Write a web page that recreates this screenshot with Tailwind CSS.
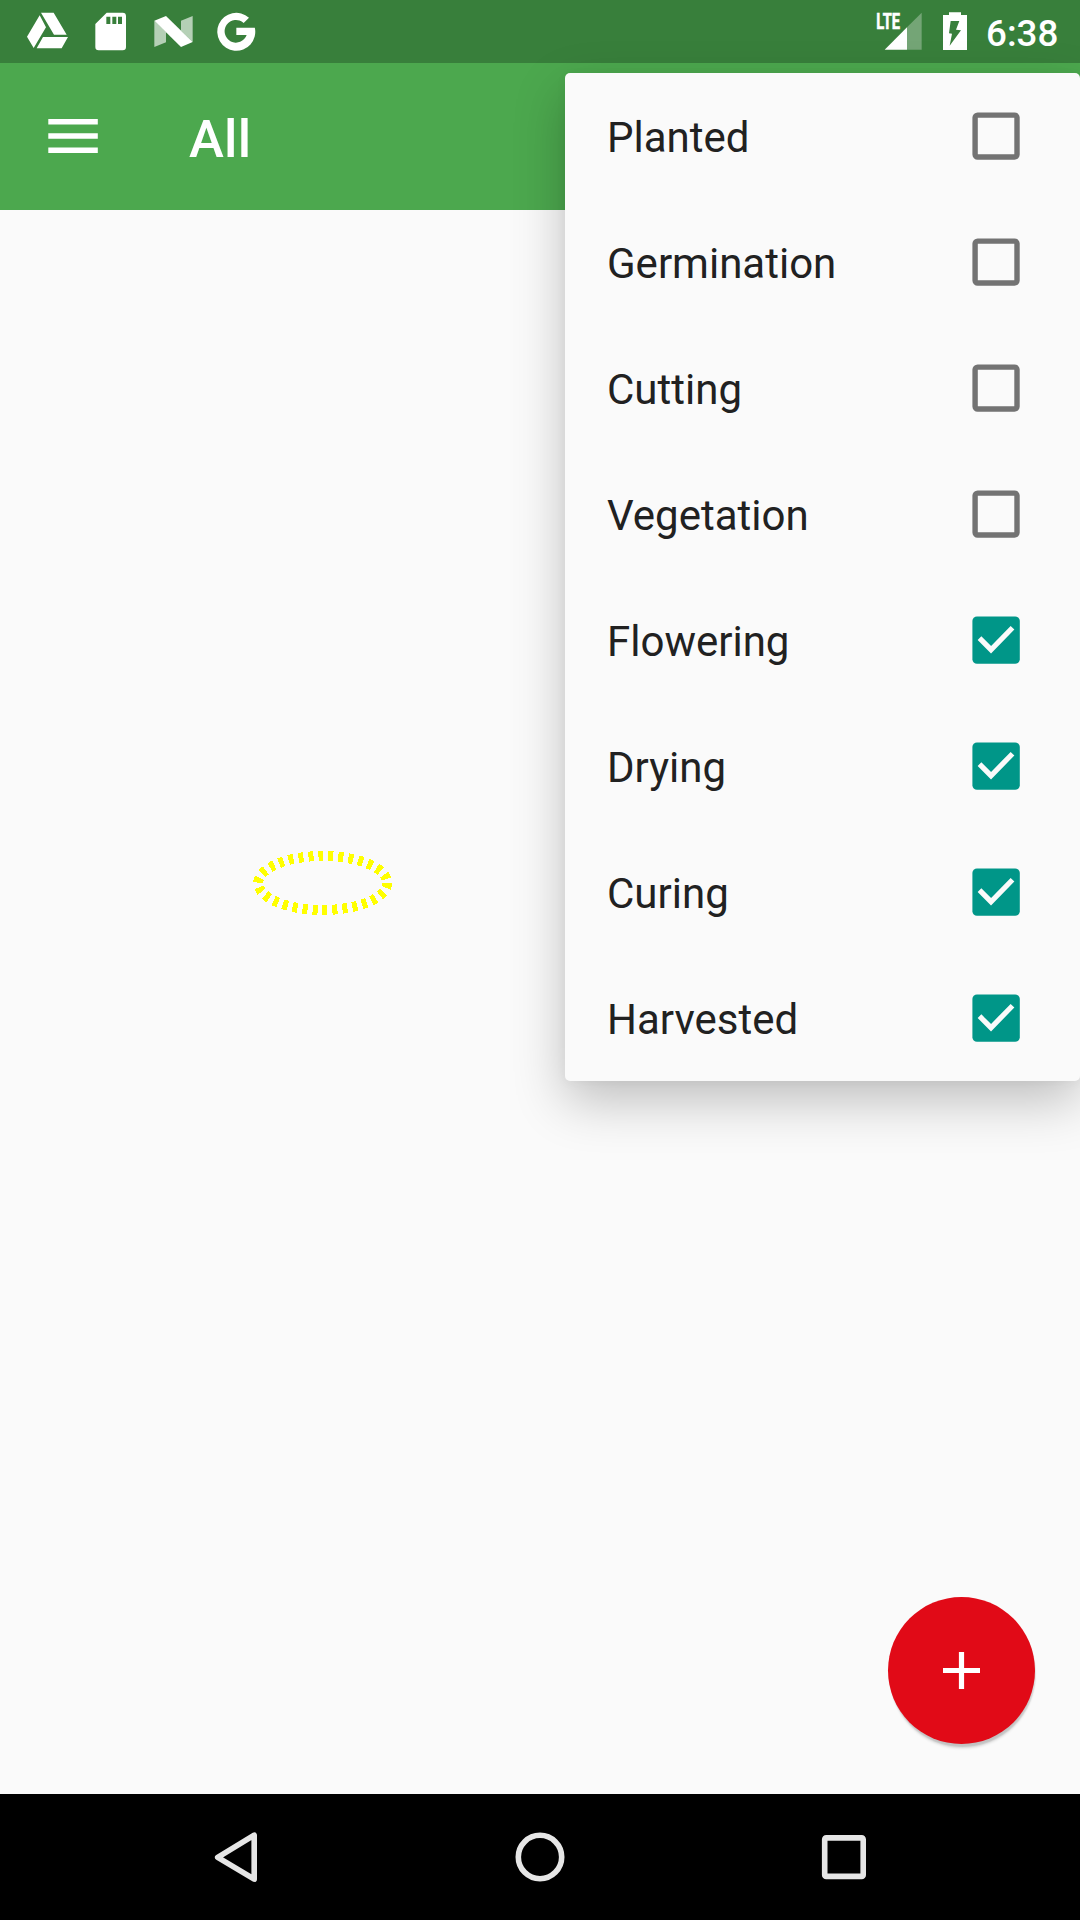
<!DOCTYPE html>
<html lang="en">
<head>
<meta charset="utf-8">
<title>All</title>
<script src="https://cdn.jsdelivr.net/npm/@tailwindcss/browser@4"></script>
</head>
<body class="relative flex h-[1920px] w-[1080px] flex-col overflow-hidden bg-[#fafafa] font-['Roboto',sans-serif]">
  <!-- Status bar -->
  <header class="flex h-[63px] shrink-0 items-start justify-between bg-[#387f3b] text-white">
    <svg class="h-[63px] w-[280px]" viewBox="0 0 840 189" fill="currentColor">
      <path d="M119 46l19 36-37 62-20-34zM123 38h38l39 66h-38zM129 111h75l-19 34h-75z"/>
      <path fill-rule="evenodd" d="M320 38h48q10 0 10 10v93q0 10-10 10h-72q-10 0-10-10V72zM319 50v22h12V50zM337 50v22h12V50zM354 50v22h12V50z"/>
      <path fill-opacity=".63" d="M463 62l35 34v31l-35 14zM578 48v78l-35-34V62z"/>
      <path d="M463 62l35-14 80 78-35 15z"/>
      <path d="M747 53 731 69A34 34 0 1 0 740 105H709V83h55.500A57 57 0 1 1 747 53z"/>
    </svg>
    <svg class="h-[63px] w-[230px]" viewBox="0 0 690 189" fill="currentColor">
      <text x="79" y="87" font-size="66" font-weight="700" textLength="71" lengthAdjust="spacingAndGlyphs" stroke="currentColor" stroke-width="1.800">LTE</text>
      <path fill-opacity=".3" d="M215 38v111H171V82z"/>
      <path d="M104 149 171 82V149z"/>
      <path fill-rule="evenodd" d="M297 37h36v8h18v105h-72V45h18zM302 63l-5 37 9 1-7 36 34-46-15-2 10-26z"/>
      <text x="408" y="138" font-size="110.250" font-weight="500">6:38</text>
    </svg>
  </header>

  <!-- App bar -->
  <div class="flex h-[147px] shrink-0 items-center bg-[#4ca84e] pl-12 text-white">
    <svg class="h-[36px] w-[50px]" viewBox="0 0 50 36" fill="currentColor">
      <path d="M.3 0h49.500v5.600H.3zM.3 14.200h49.500v5.600H.3zM.3 28.400h49.500v5.600H.3z"/>
    </svg>
    <h1 class="pt-[4px] pl-[91px] text-[52.500px] leading-[62px] font-medium tracking-[0.3px]">All</h1>
  </div>

  <!-- Content -->
  <main class="relative flex-1">
    <svg class="absolute top-[635px] left-[247px] h-[76px] w-[152px]" viewBox="0 0 152 76" fill="none" shape-rendering="crispEdges">
      <ellipse cx="75.700" cy="38" rx="64.500" ry="27" stroke="#ffff00" stroke-width="10" stroke-dasharray="5 5"/>
    </svg>
    <button class="absolute top-[1387px] left-[888px] flex size-[147px] items-center justify-center rounded-full bg-[#e10a17] shadow-[1px_6px_3px_-2px_rgba(0,0,0,0.16),1px_3px_1px_rgba(0,0,0,0.08)]">
      <svg class="size-[37px]" viewBox="0 0 37 37" stroke="#fff" stroke-width="5.200"><path d="M0 18.500h37M18.500 0v37"/></svg>
    </button>
  </main>

  <!-- Navigation bar -->
  <nav class="flex h-[126px] shrink-0 items-center bg-black text-[#e6e6e6]">
    <svg class="h-[126px] w-[1080px]" viewBox="0 0 1080 126" fill="none" stroke="currentColor" stroke-width="5.600" stroke-linejoin="round">
      <path d="M217.700 63.300 254.200 41.200V85.200z"/>
      <circle cx="540" cy="63" r="21.700"/>
      <rect x="824.700" y="43.900" width="38.500" height="38.500" rx="1.500"/>
    </svg>
  </nav>

  <!-- Stage filter menu -->
  <ul id="menu" class="absolute top-[73px] left-[565px] w-[515px] rounded-[5px] bg-[#fafafa] text-[42px] text-[#212121] shadow-[0_20px_52px_rgba(0,0,0,0.24),0_2px_12px_rgba(0,0,0,0.04)]"></ul>

  <script>
    const stages = [
      ['Planted', false], ['Germination', false], ['Cutting', false], ['Vegetation', false],
      ['Flowering', true], ['Drying', true], ['Curing', true], ['Harvested', true],
    ];
    const empty = '<rect x="3.100" y="3.100" width="41.900" height="41.900" rx="2.500" fill="none" stroke="#737373" stroke-width="5.400"/>';
    const ticked = '<rect x=".4" y=".4" width="47.400" height="47.400" rx="4.600" fill="#009688"/><path d="M7.500 22.200 19 33.700 40.500 11.700" fill="none" stroke="#fafafa" stroke-width="5.200"/>';
    document.getElementById('menu').innerHTML = stages.map(([name, on]) =>
      `<li class="flex h-[126px] items-center justify-between pr-[59px] pl-[42px]"><span class="pt-[2px]">${name}</span><svg class="size-[49px]" viewBox="0 0 49 49">${on ? ticked : empty}</svg></li>`
    ).join('');
  </script>
</body>
</html>
